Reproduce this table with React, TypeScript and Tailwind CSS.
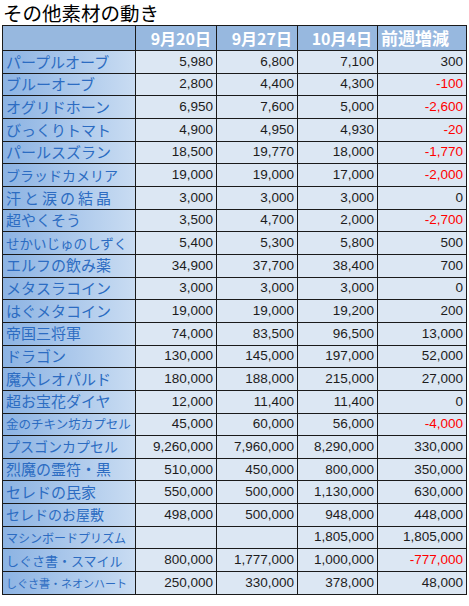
import React from 'react';

type Row = {
  name: string;
  vals: string[];
  diff: string;
  size?: string;
};

const rows: Row[] = [
  { name: 'パープルオーブ', vals: ['5,980', '6,800', '7,100'], diff: '300' },
  { name: 'ブルーオーブ', vals: ['2,800', '4,400', '4,300'], diff: '-100' },
  { name: 'オグリドホーン', vals: ['6,950', '7,600', '5,000'], diff: '-2,600' },
  { name: 'びっくりトマト', vals: ['4,900', '4,950', '4,930'], diff: '-20' },
  { name: 'パールスズラン', vals: ['18,500', '19,770', '18,000'], diff: '-1,770' },
  { name: 'ブラッドカメリア', vals: ['19,000', '19,000', '17,000'], diff: '-2,000', size: 'text-[14px]' },
  { name: '汗と涙の結晶', vals: ['3,000', '3,000', '3,000'], diff: '0', size: 'text-[15px] tracking-[3px]' },
  { name: '超やくそう', vals: ['3,500', '4,700', '2,000'], diff: '-2,700' },
  { name: 'せかいじゅのしずく', vals: ['5,400', '5,300', '5,800'], diff: '500', size: 'text-[13.5px]' },
  { name: 'エルフの飲み薬', vals: ['34,900', '37,700', '38,400'], diff: '700' },
  { name: 'メタスラコイン', vals: ['3,000', '3,000', '3,000'], diff: '0' },
  { name: 'はぐメタコイン', vals: ['19,000', '19,000', '19,200'], diff: '200' },
  { name: '帝国三将軍', vals: ['74,000', '83,500', '96,500'], diff: '13,000' },
  { name: 'ドラゴン', vals: ['130,000', '145,000', '197,000'], diff: '52,000' },
  { name: '魔犬レオパルド', vals: ['180,000', '188,000', '215,000'], diff: '27,000' },
  { name: '超お宝花ダイヤ', vals: ['12,000', '11,400', '11,400'], diff: '0' },
  { name: '金のチキン坊カプセル', vals: ['45,000', '60,000', '56,000'], diff: '-4,000', size: 'text-[12.5px]' },
  { name: 'プスゴンカプセル', vals: ['9,260,000', '7,960,000', '8,290,000'], diff: '330,000', size: 'text-[14px]' },
  { name: '烈魔の霊符・黒', vals: ['510,000', '450,000', '800,000'], diff: '350,000' },
  { name: 'セレドの民家', vals: ['550,000', '500,000', '1,130,000'], diff: '630,000' },
  { name: 'セレドのお屋敷', vals: ['498,000', '500,000', '948,000'], diff: '448,000', size: 'text-[14px]' },
  { name: 'マシンボードプリズム', vals: ['', '', '1,805,000'], diff: '1,805,000', size: 'text-[12px]' },
  { name: 'しぐさ書・スマイル', vals: ['800,000', '1,777,000', '1,000,000'], diff: '-777,000', size: 'text-[13px]' },
  { name: 'しぐさ書・ネオンハート', vals: ['250,000', '330,000', '378,000'], diff: '48,000', size: 'text-[11px]' },
];

const jp = "font-['Noto_Sans_CJK_JP','Noto_Sans',sans-serif]";
const num = "font-['Liberation_Sans',Arial,sans-serif]";

export default function App() {
  return (
    <div className="w-[469px] h-[606px] bg-white">
      <div className={`h-[25px] pl-[3px] flex items-center text-[19.5px] leading-[25px] text-black ${jp}`}>
        その他素材の動き
      </div>
      <div className="ml-[2px] w-[465px] border-l border-t border-[#1a1a1a] grid grid-cols-[133px_81px_81px_80px_89px] grid-rows-[25px_repeat(24,22.67px)]">
        <div className="bg-[#97b8df] border-r border-b border-[#1a1a1a]" />
        {['9月20日', '9月27日', '10月4日'].map((h) => (
          <div
            key={h}
            className={`bg-[#97b8df] border-r border-b border-[#1a1a1a] flex items-center justify-end pr-[5px] text-white font-bold text-[16px] ${jp}`}
          >
            {h}
          </div>
        ))}
        <div className={`bg-[#97b8df] border-r border-b border-[#1a1a1a] flex items-center pl-[3px] text-white font-bold text-[17px] ${jp}`}>
          前週増減
        </div>
        {rows.map((r) => (
          <React.Fragment key={r.name}>
            <div
              className={`bg-linear-to-r from-[#8cb3e3] to-[#c9dcf2] border-r border-b border-[#1a1a1a] flex items-center pl-[3px] whitespace-nowrap overflow-hidden text-[#2c6cc2] ${jp} ${r.size ?? 'text-[15px]'}`}
            >
              {r.name}
            </div>
            {r.vals.map((v, i) => (
              <div
                key={i}
                className={`bg-[#dce7f3] border-r border-b border-[#1a1a1a] flex items-center justify-end pr-[3px] text-[13.5px] text-[#1c1c1c] ${num}`}
              >
                {v}
              </div>
            ))}
            <div
              className={`bg-[#dce7f3] border-r border-b border-[#1a1a1a] flex items-center justify-end pr-[3px] text-[13.5px] ${num} ${
                r.diff.startsWith('-') ? 'text-[#ff0000]' : 'text-[#1c1c1c]'
              }`}
            >
              {r.diff}
            </div>
          </React.Fragment>
        ))}
      </div>
    </div>
  );
}
